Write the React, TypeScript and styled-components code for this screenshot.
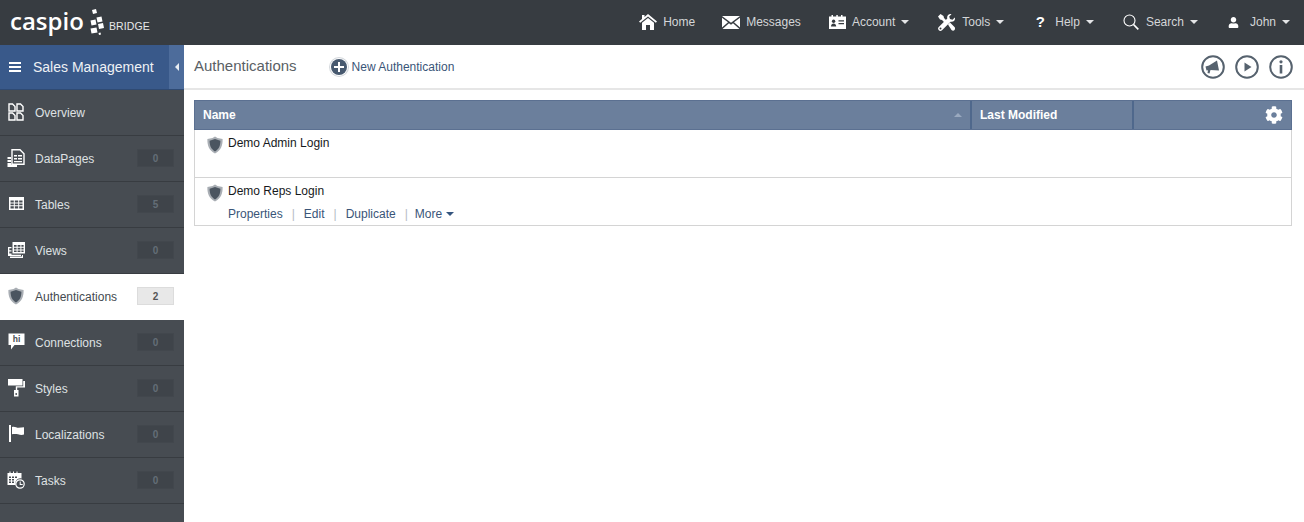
import React from 'react'
import styled, {createGlobalStyle} from 'styled-components'
import {FaUser, FaCog} from 'react-icons/fa'

const GlobalStyle = createGlobalStyle`
  html, body {
    margin: 0;
    padding: 0;
    background: #fff;
  }
  body {
    font-family: 'Liberation Sans', Arial, sans-serif;
    font-size: 12px;
  }
`

const Page = styled.div`
  width: 1304px;
  height: 522px;
  display: flex;
  flex-direction: column;
  overflow: hidden;
`

const TopBar = styled.header`
  height: 45px;
  flex: none;
  display: flex;
  align-items: center;
  justify-content: space-between;
  background: #373c41;
`

const Logo = styled.div`
  display: flex;
  align-items: center;
  padding-left: 10px;
  color: #fff;
`

const LogoWord = styled.span`
  width: 73px;
  font-family: 'Open Sans', sans-serif;
  font-size: 24px;
  font-weight: 600;
  line-height: 30px;
  margin: -4px 5px 0 0;
`

const LogoTag = styled.span`
  font-size: 10.5px;
  color: #e6e8ea;
  margin: 7px 0 0 5px;
  letter-spacing: 0.1px;
`

const Nav = styled.nav`
  display: flex;
  align-items: center;
  padding-right: 14px;
  margin-top: -1px;
`

const NavItem = styled.div<{$gap: number}>`
  display: flex;
  align-items: center;
  color: #d4d6d8;
  margin-right: ${p => p.$gap}px;
  font-size: 12px;
  white-space: nowrap;
`

const NavIcon = styled.span<{$w: number; $mr: number}>`
  display: flex;
  justify-content: center;
  width: ${p => p.$w}px;
  margin-right: ${p => p.$mr}px;
  color: #fff;
`

const HelpGlyph = styled.b`
  font-size: 15px;
  line-height: 16px;
`

const Caret = styled.span`
  width: 0;
  height: 0;
  margin-left: 6px;
  border-left: 4px solid transparent;
  border-right: 4px solid transparent;
  border-top: 4px solid #e4e5e7;
`

const Body = styled.div`
  flex: 1;
  display: flex;
  min-height: 0;
`

const Sidebar = styled.aside`
  width: 184px;
  flex: none;
  background: #474c52;
`

const AppHeader = styled.div`
  height: 45px;
  display: flex;
  align-items: center;
  background: #39598a;
  color: #eef1f5;
  font-size: 14px;
  box-sizing: border-box;
  border-bottom: 1px solid #2f4a73;
`

const MenuIcon = styled.div`
  width: 12px;
  height: 10px;
  margin: 0 12px 0 9px;
  border-top: 2px solid #fff;
  border-bottom: 2px solid #fff;
  position: relative;
  box-sizing: border-box;
  &::after {
    content: '';
    position: absolute;
    left: 0;
    right: 0;
    top: 2px;
    height: 2px;
    background: #fff;
  }
`

const AppName = styled.span`
  flex: 1;
`

const Collapse = styled.div`
  width: 15px;
  align-self: stretch;
  display: flex;
  align-items: center;
  justify-content: center;
  background: #4d6c9b;
  &::after {
    content: '';
    border-top: 4px solid transparent;
    border-bottom: 4px solid transparent;
    border-right: 4px solid #e8edf3;
  }
`

const SideItem = styled.div<{$active?: boolean}>`
  height: 46px;
  box-sizing: border-box;
  display: flex;
  align-items: center;
  padding: 0 10px 0 7px;
  background: ${p => (p.$active ? '#fff' : '#474c52')};
  color: ${p => (p.$active ? '#444a50' : '#dfe1e3')};
  border-bottom: 1px solid ${p => (p.$active ? '#fff' : '#383c41')};
  font-size: 12px;
`

const SideIcon = styled.span<{$active?: boolean}>`
  width: 18px;
  height: 18px;
  margin: 0 10px 2px 0;
  display: flex;
  align-items: center;
  justify-content: center;
  color: ${p => (p.$active ? '#4b5560' : '#fff')};
`

const SideLabel = styled.span`
  flex: 1;
`

const Count = styled.span<{$active?: boolean}>`
  width: 37px;
  height: 18px;
  margin-bottom: 1px;
  display: flex;
  align-items: center;
  justify-content: center;
  font-size: 10px;
  font-weight: 700;
  background: ${p => (p.$active ? '#e8e8e8' : '#3f444a')};
  color: ${p => (p.$active ? '#555' : '#646e77')};
  box-shadow: inset 0 0 0 1px ${p => (p.$active ? '#dcdcdc' : '#42474d')};
`

const Main = styled.main`
  flex: 1;
  min-width: 0;
  display: flex;
  flex-direction: column;
`

const Toolbar = styled.div`
  height: 43px;
  flex: none;
  display: flex;
  align-items: center;
  padding: 0 11px 0 10px;
  border-bottom: 2px solid #e6e6e6;
`

const PageTitle = styled.h1`
  margin: 0 32px 2px 0;
  font-size: 15px;
  font-weight: 400;
  color: #5a5f65;
`

const NewButton = styled.div`
  display: flex;
  align-items: center;
  color: #3a5578;
  font-size: 12px;
  gap: 5px;
  flex: 1;
`

const PlusCircle = styled.span`
  width: 16px;
  height: 16px;
  border-radius: 50%;
  background: #47596f;
  box-shadow: 0 0 0 1px #fff, 0 0 0 2px #d4d8dc;
  position: relative;
  display: block;
  margin-left: 2px;
  &::before,
  &::after {
    content: '';
    position: absolute;
    background: #fff;
  }
  &::before {
    left: 3px;
    right: 3px;
    top: 7px;
    height: 2px;
  }
  &::after {
    top: 3px;
    bottom: 3px;
    left: 7px;
    width: 2px;
  }
`

const ToolIcons = styled.div`
  display: flex;
  gap: 10px;
  color: #56626e;
`

const Content = styled.div`
  padding: 10px 12px 0 10px;
`

const Table = styled.div`
  border: 1px solid #d4d4d4;
  border-top: none;
`

const HeadRow = styled.div`
  height: 30px;
  margin: 0 -1px;
  box-sizing: border-box;
  display: grid;
  grid-template-columns: 777px 162px 1fr;
  background: #6b7f9c;
  border: 1px solid #5b7091;
  color: #fff;
  font-size: 12px;
  font-weight: 700;
`

const HeadCell = styled.div<{$divider?: boolean}>`
  display: flex;
  align-items: center;
  justify-content: space-between;
  padding: 0 8px;
  border-right: ${p => (p.$divider ? '2px solid #4f688c' : 'none')};
`

const SortUp = styled.span`
  border-left: 4px solid transparent;
  border-right: 4px solid transparent;
  border-bottom: 4px solid #9aa9bf;
`

const HeadAction = styled(HeadCell)`
  justify-content: flex-end;
`

const Row = styled.div`
  height: 47px;
  box-sizing: border-box;
  padding: 6px 11px 0;
  display: flex;
  align-items: flex-start;
  gap: 4px;
  & + & {
    height: 48px;
    border-top: 1px solid #d4d4d4;
  }
`

const RowBody = styled.div`
  display: flex;
  flex-direction: column;
`

const RowName = styled.div`
  color: #16191c;
  font-size: 12px;
  line-height: 14px;
`

const Actions = styled.div`
  display: flex;
  align-items: center;
  margin-top: 9px;
  color: #3a5578;
  font-size: 12px;
  line-height: 14px;
`

const Sep = styled.span`
  margin: 0 9px;
  color: #b5bcc4;
`

const MoreLink = styled.span`
  margin-left: -2px;
`

const MoreCaret = styled.span`
  margin-left: 4px;
  border-left: 4px solid transparent;
  border-right: 4px solid transparent;
  border-top: 4px solid #34557f;
`

const Shield = ({size = 18, color = '#4b5560'}: {size?: number; color?: string}) => (
  <svg width={size} height={size} viewBox="0 0 18 18">
    <path d="M9 .6 11.500 2 16.600 3c.2 6.600-1.500 11.200-7.600 14.400C2.900 14.200 1.200 9.600 1.400 3L6.500 2z" fill="#a9aeb4" />
    <path d="M9 3l5.400 1.800c0 4.800-1.200 8.200-5.400 10.600C4.800 13 3.600 9.600 3.600 4.800z" fill={color} />
  </svg>
)

const OverviewIcon = () => (
  <svg width="16" height="18" viewBox="0 0 16 18" fill="none" stroke="#fff" strokeWidth="1.400">
    <path d="M1 1h3.500L7 3.500V8H1zM9 1h3.500L15 3.500V8H9zM1 10h3.500L7 12.500V17H1zM9 10h3.500l2.500 2.500V17H9z" />
  </svg>
)

const DataPagesIcon = () => (
  <svg width="18" height="18" viewBox="0 0 18 18">
    <path d="M5 .7h8l4 4V15.300H5z" fill="none" stroke="#fff" strokeWidth="1.400" />
    <path d="M7 6h3v1.500H7zM11 6h4v1.500h-4zM7 9h3v1.500H7zM11 9h4v1.500h-4zM7 12h8v1.300H7z" fill="#fff" />
    <path d="M.5 8h3.500v2H.5zM.5 11h3.500v2H.5zM.5 14h3.500v1.800h6V18H.5z" fill="#fff" />
  </svg>
)

const TablesIcon = () => (
  <svg width="15" height="13" viewBox="0 0 15 13">
    <path d="M0 0h15v13H0z" fill="#fff" />
    <path d="M1.500 3.500h3.300v2H1.500zM5.800 3.500h3.400v2H5.800zM10.200 3.500h3.300v2h-3.300zM1.500 6.500h3.300v1.800H1.500zM5.800 6.500h3.400v1.800H5.800zM10.200 6.500h3.300v1.800h-3.300zM1.500 9.300h3.300v2.200H1.500zM5.800 9.300h3.400v2.200H5.800zM10.200 9.300h3.300v2.200h-3.300z" fill="#474c52" />
  </svg>
)

const ViewsIcon = () => (
  <svg width="17" height="16" viewBox="0 0 17 16">
    <path d="M4.500 0H17v11.500H4.500z" fill="#fff" />
    <path d="M6 3h2.600v1.700H6zM9.600 3h2.800v1.700H9.600zM13.400 3h2.200v1.700h-2.200zM6 5.700h2.600v1.700H6zM9.600 5.700h2.800v1.700H9.600zM13.400 5.700h2.200v1.700h-2.200zM6 8.400h2.600v1.700H6zM9.600 8.400h2.800v1.700H9.600zM13.400 8.400h2.200v1.700h-2.200z" fill="#474c52" />
    <path d="M0 5h3.500v1.300H1.300v2H3.500v1.200H1.300v2H3.500v1.200h9.500V14H0z" fill="#fff" />
    <path d="M2 14.500h12V13h1v3H2z" fill="#fff" />
  </svg>
)

const ConnectionsIcon = () => (
  <svg width="17" height="17" viewBox="0 0 17 17">
    <path d="M.5.500h16V12H6.500L3 16.500V12H.500z" fill="#fff" />
    <text x="8.500" y="9" textAnchor="middle" fontSize="8.500" fontWeight="700" fontFamily="Liberation Sans" fill="#474c52">
      hi
    </text>
  </svg>
)

const StylesIcon = () => (
  <svg width="17" height="18" viewBox="0 0 17 18">
    <path d="M0 0h14.500v6.500H0zM15.200 2H17v6.500H9.200v3H7.800V7.300h7.400z" fill="#fff" />
    <path d="M6 11h4.500v6.500H6z" fill="#fff" />
    <circle cx="8.200" cy="15" r="0.900" fill="#474c52" />
  </svg>
)

const FlagIcon = () => (
  <svg width="15" height="17" viewBox="0 0 15 17">
    <path d="M0 0h2v17H0z" fill="#fff" />
    <path d="M3 2c2.500-1 4.500.800 6.500.800L15 2.300v7.200c-2 .900-4.200.300-6-.200-1.500-.400-4.800-.400-6 0z" fill="#fff" />
  </svg>
)

const TasksIcon = () => (
  <svg width="18" height="18" viewBox="0 0 18 18">
    <path d="M.5 2h14v5.500a5 5 0 0 0-6 6.500H.5z" fill="#fff" />
    <path d="M2 5.500h2v1.500H2zM5 5.500h2v1.500H5zM8 5.500h2v1.500H8zM2 8h2v1.500H2zM5 8h2v1.500H5zM2 10.500h2V12H2zM5 10.500h2V12H5z" fill="#474c52" />
    <path d="M2.500 .5h1v2.500h-1zM6 .5h1v2.500H6zM9.500 .5h1v2.500h-1z" fill="#fff" />
    <circle cx="13" cy="13" r="4.200" fill="none" stroke="#fff" strokeWidth="1.200" />
    <path d="M12.700 10.500h1v2.600h2v1h-3z" fill="#fff" />
  </svg>
)

const HomeIcon = () => (
  <svg width="18" height="16" viewBox="0 0 18 16" fill="#fff">
    <path d="M9 0 18 7.500 16.800 8.800 9 2.500 1.200 8.800 0 7.500l3-2.500V1h2.500v2z" />
    <path d="M9 4l6 4.800V16h-4v-5H7v5H3V8.800z" />
  </svg>
)

const MailIcon = () => (
  <svg width="18" height="13" viewBox="0 0 18 13" fill="#fff">
    <path d="M0 0h18L9 6.800z" />
    <path d="M0 1.800 6 6.300 0 11.500zM18 1.800 12 6.300l6 5.200zM7 7.200 9 8.700l2-1.500 6.500 5.800H.5z" />
  </svg>
)

const AccountIcon = () => (
  <svg width="17" height="14" viewBox="0 0 17 14">
    <path d="M0 1.500h2.500V0H4v1.500h3.300V0h1.500v1.500h3.200V0h1.500v1.500H17V14H0z" fill="#fff" />
    <circle cx="4.600" cy="6.300" r="1.700" fill="#373c41" />
    <path d="M2 11.500c0-4 5.200-4 5.200 0zM9.500 5.200h5.500v1.300H9.500zM9.500 8h5.500v1.300H9.500z" fill="#373c41" />
  </svg>
)

const ToolsIcon = () => (
  <svg width="17" height="17" viewBox="0 0 17 17" fill="#fff">
    <path d="M0 2.500 2.500 0l3 2 .5 2 2.500 2.500-2 2L4 6 2 5.500zM10 10.500l2-2 4.500 4.500c.8.800.8 2 0 3s-2.200.800-3 0z" />
    <path d="M16.800 3.500 14.500 5.800 12 5 11.200 2.500 13.500.2C11-.6 8.500 1.500 9.300 4.500L.8 13c-1 1-1 2.200 0 3.200s2.200 1 3.200 0l8.500-8.500c3 .8 5.200-1.700 4.300-4.200z" />
    <circle cx="2.500" cy="14.500" r="1" fill="#373c41" />
  </svg>
)

const SearchIcon = () => (
  <svg width="16" height="16" viewBox="0 0 16 16" fill="none" stroke="#fff">
    <circle cx="6.500" cy="6.500" r="5.500" strokeWidth="1.100" />
    <path d="M10.500 10.500 15.300 15.300" strokeWidth="1.700" />
  </svg>
)

const MegaphoneIcon = () => (
  <svg width="24" height="24" viewBox="0 0 24 24">
    <circle cx="12" cy="12" r="10.800" fill="none" stroke="currentColor" strokeWidth="2" />
    <path d="M4.500 11.500 8 10.500 16 5.500 18 15.500 9.500 15 8.500 18.500 6.500 18 7 15.200 5.500 15.500z" fill="currentColor" />
  </svg>
)

const PlayIcon = () => (
  <svg width="24" height="24" viewBox="0 0 24 24">
    <circle cx="12" cy="12" r="10.800" fill="none" stroke="currentColor" strokeWidth="2" />
    <path d="M9.500 7.500 16.500 12 9.500 16.500z" fill="currentColor" />
  </svg>
)

const InfoIcon = () => (
  <svg width="24" height="24" viewBox="0 0 24 24">
    <circle cx="12" cy="12" r="10.800" fill="none" stroke="currentColor" strokeWidth="2" />
    <path d="M10.700 10h2.600v8.500h-2.600z" fill="currentColor" />
    <circle cx="12" cy="6.800" r="1.600" fill="currentColor" />
  </svg>
)

const LogoDots = () => (
  <svg width="16" height="27" viewBox="0 0 16 27" fill="#fff">
    <path d="M4 1 8 0l1 4-4 1zM8.500 8.500l5-1 1 5-5 1zM2.500 11.500l5-1 1 5-5 1zM10 15l5-1 1 5-5 1zM2.500 19.500l6-1 1 5-6 1zM10.500 24l2-.5.500 2-2 .5z" />
  </svg>
)

const navItems = [
  {label: 'Home', icon: <HomeIcon />, w: 18, mr: 6, gap: 27},
  {label: 'Messages', icon: <MailIcon />, w: 18, mr: 6, gap: 28},
  {label: 'Account', icon: <AccountIcon />, w: 17, mr: 6, caret: true, gap: 29},
  {label: 'Tools', icon: <ToolsIcon />, w: 17, mr: 7, caret: true, gap: 30},
  {label: 'Help', icon: <HelpGlyph>?</HelpGlyph>, w: 12, mr: 9, caret: true, gap: 29},
  {label: 'Search', icon: <SearchIcon />, w: 16, mr: 7, caret: true, gap: 30},
  {label: 'John', icon: <FaUser size={11} />, w: 12, mr: 10, caret: true, gap: 0},
]

const sideItems = [
  {label: 'Overview', icon: <OverviewIcon />},
  {label: 'DataPages', icon: <DataPagesIcon />, count: 0},
  {label: 'Tables', icon: <TablesIcon />, count: 5},
  {label: 'Views', icon: <ViewsIcon />, count: 0},
  {label: 'Authentications', icon: <Shield />, count: 2, active: true},
  {label: 'Connections', icon: <ConnectionsIcon />, count: 0},
  {label: 'Styles', icon: <StylesIcon />, count: 0},
  {label: 'Localizations', icon: <FlagIcon />, count: 0},
  {label: 'Tasks', icon: <TasksIcon />, count: 0},
]

export default function App() {
  return (
    <Page>
      <GlobalStyle />
      <TopBar>
        <Logo>
          <LogoWord>caspio</LogoWord>
          <LogoDots />
          <LogoTag>BRIDGE</LogoTag>
        </Logo>
        <Nav>
          {navItems.map(item => (
            <NavItem key={item.label} $gap={item.gap}>
              <NavIcon $w={item.w} $mr={item.mr}>
                {item.icon}
              </NavIcon>
              {item.label}
              {item.caret && <Caret />}
            </NavItem>
          ))}
        </Nav>
      </TopBar>
      <Body>
        <Sidebar>
          <AppHeader>
            <MenuIcon />
            <AppName>Sales Management</AppName>
            <Collapse />
          </AppHeader>
          {sideItems.map(item => (
            <SideItem key={item.label} $active={item.active}>
              <SideIcon $active={item.active}>{item.icon}</SideIcon>
              <SideLabel>{item.label}</SideLabel>
              {item.count !== undefined && <Count $active={item.active}>{item.count}</Count>}
            </SideItem>
          ))}
        </Sidebar>
        <Main>
          <Toolbar>
            <PageTitle>Authentications</PageTitle>
            <NewButton>
              <PlusCircle />
              New Authentication
            </NewButton>
            <ToolIcons>
              <MegaphoneIcon />
              <PlayIcon />
              <InfoIcon />
            </ToolIcons>
          </Toolbar>
          <Content>
            <Table>
              <HeadRow>
                <HeadCell $divider>
                  Name
                  <SortUp />
                </HeadCell>
                <HeadCell $divider>Last Modified</HeadCell>
                <HeadAction>
                  <FaCog size={18} />
                </HeadAction>
              </HeadRow>
              <Row>
                <Shield />
                <RowBody>
                  <RowName>Demo Admin Login</RowName>
                </RowBody>
              </Row>
              <Row>
                <Shield />
                <RowBody>
                  <RowName>Demo Reps Login</RowName>
                  <Actions>
                    Properties
                    <Sep>|</Sep>
                    Edit
                    <Sep>|</Sep>
                    Duplicate
                    <Sep>|</Sep>
                    <MoreLink>More</MoreLink>
                    <MoreCaret />
                  </Actions>
                </RowBody>
              </Row>
            </Table>
          </Content>
        </Main>
      </Body>
    </Page>
  )
}
